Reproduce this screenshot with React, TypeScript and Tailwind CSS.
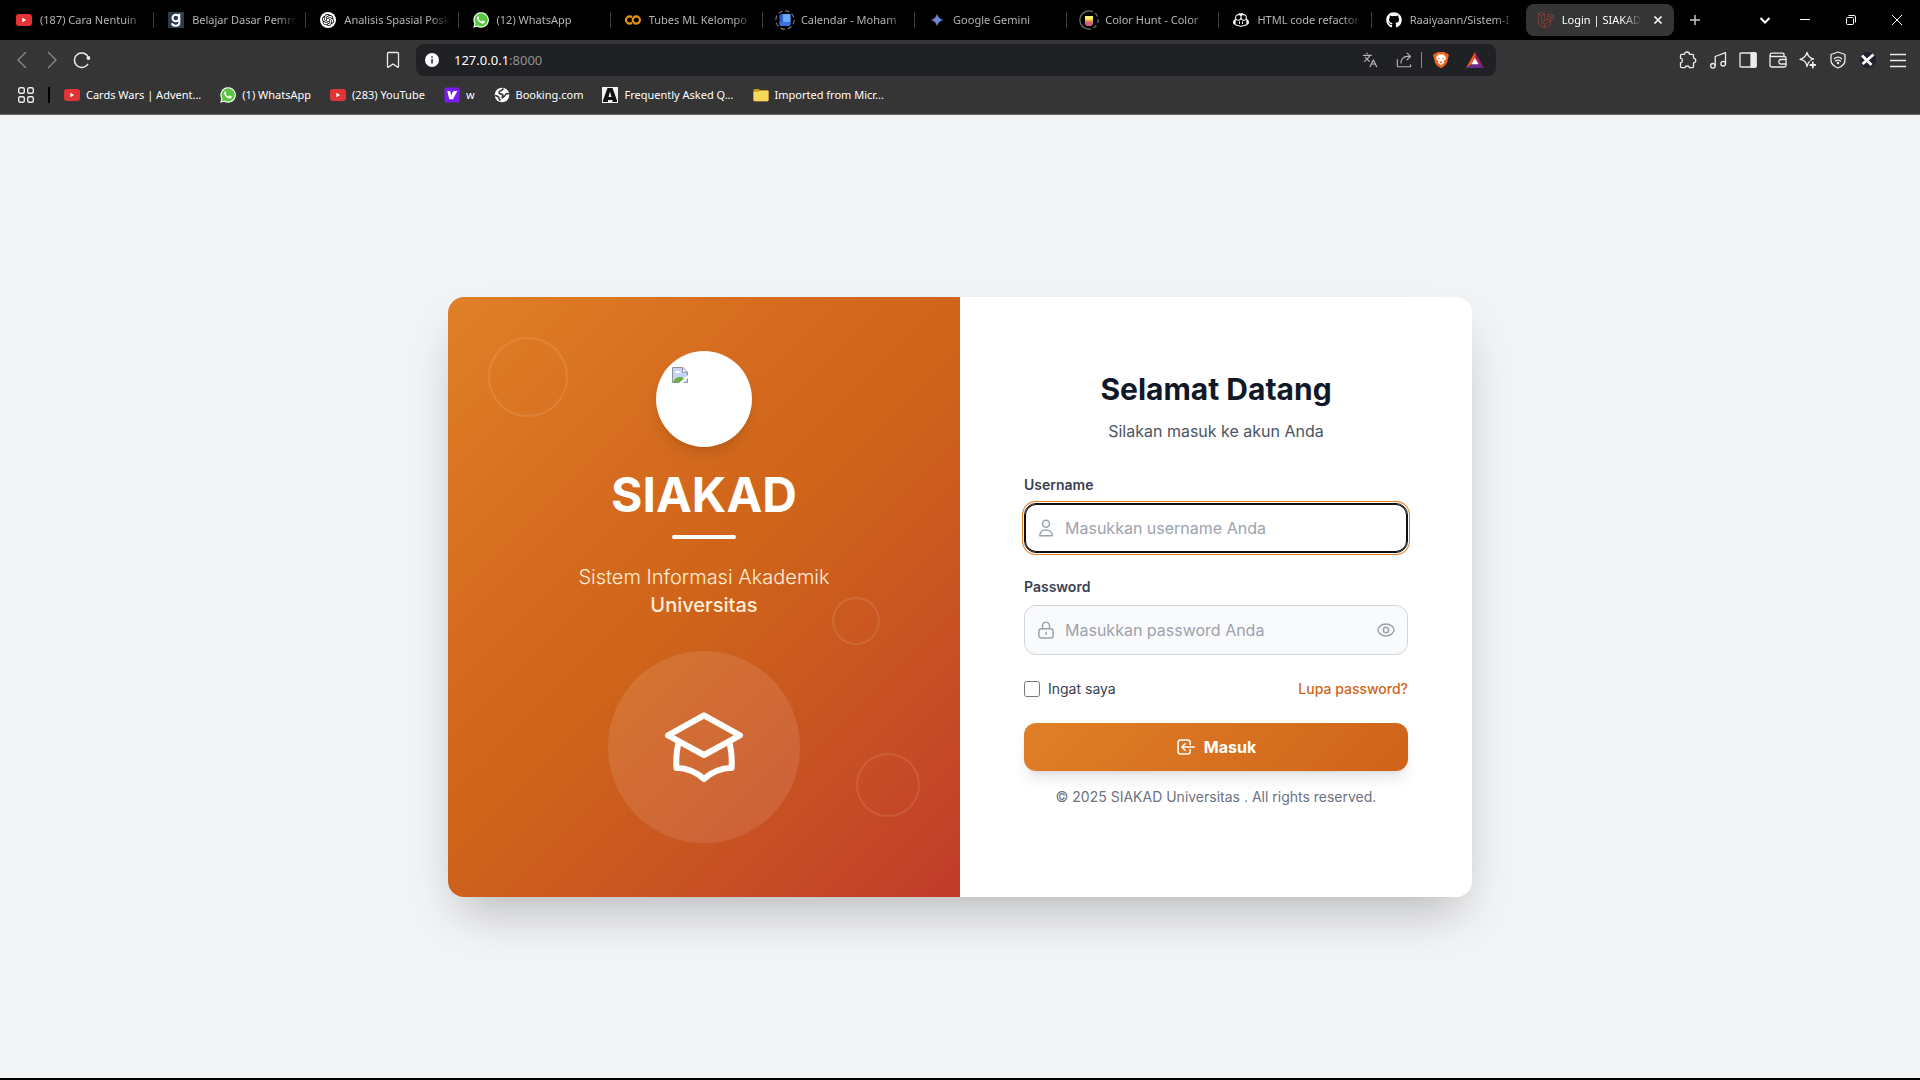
import React from "react";
import type { ReactNode } from "react";
import { FaGithub } from "react-icons/fa";
import { GoCopilot } from "react-icons/go";
import { SiGooglecolab, SiLaravel, SiOpenai } from "react-icons/si";
import { Languages } from "lucide-react";

/* ---------- favicons ---------- */

const YouTubeMark = () => (
  <svg viewBox="0 0 16 16" className="size-4 shrink-0">
    <rect x="0" y="2" width="16" height="12" rx="3" fill="#e13535" />
    <path d="M6.3 5.8v4.4L10.2 8z" fill="#fff" />
  </svg>
);

const WhatsAppMark = () => (
  <svg viewBox="0 0 16 16" className="size-4 shrink-0">
    <path d="M.2 15.8l1.1-4A7.8 7.8 0 1 1 4.3 14.8z" fill="#f4fff2" />
    <path d="M1.8 14.2l.8-2.7A6.6 6.6 0 1 1 4.6 13.5z" fill="#5cc443" />
    <path
      d="M5.3 4.2c-.5 0-1.2.6-1.2 1.7 0 1.3 1 2.6 1.8 3.5 1.1 1.2 2.6 2.1 3.9 2.1 1.2 0 2-.7 2-1.5 0-.5 0-.6-.4-.8l-1.5-.7c-.3-.1-.5 0-.7.2l-.5.7c-.1.2-.3.2-.6.1-1-.4-1.9-1.2-2.5-2.2-.1-.2-.1-.4.1-.6l.4-.5c.1-.2.1-.3 0-.6l-.5-1.2c-.1-.2-.2-.2-.3-.2z"
      fill="#fff"
    />
  </svg>
);

const GLetterMark = () => (
  <svg viewBox="0 0 16 16" className="size-4 shrink-0">
    <rect width="16" height="16" fill="#2d3a52" />
    <circle cx="7.8" cy="6" r="3.3" fill="none" stroke="#fff" strokeWidth="2.1" />
    <path d="M11.3 1.8v8.9c0 4-6.6 4-7.3.6" fill="none" stroke="#fff" strokeWidth="2" />
  </svg>
);

const OpenAiMark = () => (
  <span className="flex size-4 shrink-0 items-center justify-center rounded-full bg-white text-black">
    <SiOpenai className="size-3" />
  </span>
);

const CalendarMark = () => (
  <svg viewBox="0 0 20 20" className="-mx-0.5 size-5 shrink-0">
    <circle cx="10" cy="10" r="9.2" fill="none" stroke="#6f7378" strokeWidth="1.2" strokeDasharray="4.5 2.7" />
    <rect x="4.5" y="4" width="11" height="12" rx="2" fill="#2f62c9" />
    <rect x="8" y="4" width="7.5" height="8" rx="1" fill="#6aa8ff" />
    <path d="M4.5 12h11v2a2 2 0 0 1-2 2h-7a2 2 0 0 1-2-2z" fill="#3c6fe0" />
  </svg>
);

const GeminiMark = () => (
  <svg viewBox="0 0 16 16" className="size-4 shrink-0">
    <defs>
      <linearGradient id="gemini" x1="0" y1="0" x2="1" y2="0">
        <stop offset="0" stopColor="#9a6fc0" />
        <stop offset=".5" stopColor="#6b84dc" />
        <stop offset="1" stopColor="#4fa3e8" />
      </linearGradient>
    </defs>
    <path d="M8 1.5C8.800 5.300 10.700 7.200 14.500 8 10.700 8.800 8.800 10.700 8 14.500 7.200 10.700 5.300 8.800 1.500 8 5.300 7.200 7.200 5.300 8 1.500z" fill="url(#gemini)" />
  </svg>
);

const ColorHuntMark = () => (
  <svg viewBox="0 0 20 20" className="-mx-0.5 size-5 shrink-0">
    <path d="M10 .8a9.2 9.2 0 0 0 0 18.4" fill="none" stroke="#6f7378" strokeWidth="1.2" />
    <path d="M10 .8a9.2 9.2 0 0 1 0 18.4" fill="none" stroke="#6f7378" strokeWidth="1.2" strokeDasharray="4 2.7" />
    <path d="M6 6h8v6a4 4 0 0 1-8 0z" fill="#f6f06a" />
    <path d="M6 9.5h8V12H6z" fill="#f0b429" />
    <path d="M6 11.5h8V12a4 4 0 0 1-8 0z" fill="#d9588c" />
  </svg>
);

const VMark = () => (
  <svg viewBox="0 0 16 16" className="size-4 shrink-0">
    <rect x=".5" y=".5" width="15" height="15" rx="1.5" fill="#7a1cf0" />
    <path d="M3.300 4h2.900l.9 4.700C8.300 6.300 8.300 4 11 4h2.300L9 12.200H5.300z" fill="#fff" />
  </svg>
);

const GlobeMark = () => (
  <svg viewBox="0 0 16 16" className="size-4 shrink-0">
    <circle cx="8" cy="8" r="7.300" fill="#fff" />
    <path
      d="M9.500 1.500C8.500 3.800 4.500 3.500 5 6c.4 1.700 3.500.5 4 2.200.2 1-.8 1.500-1 2.500"
      fill="none"
      stroke="#353535"
      strokeWidth="1.600"
    />
    <path d="M14.800 7c-1.500-.8-3.300-.3-3.500 1-.3 1.800-2.600 1.500-3.300 3.500M1 8.500c1.800.2 3.700.8 4 2.800.1 1 .8 1.700 1.500 2.200" fill="none" stroke="#353535" strokeWidth="1.600" />
  </svg>
);

const LetterAMark = () => (
  <svg viewBox="0 0 16 16" className="size-4 shrink-0">
    <rect width="16" height="16" fill="#f2f2f2" />
    <path d="M5.500 1h5L15 13.500V15h-4.500v-2H6v2H1v-1.500zM8 4.500L6.500 10h3z" fill="#111" fillRule="evenodd" />
  </svg>
);

const FolderMark = () => (
  <svg viewBox="0 0 16 16" className="size-4 shrink-0">
    <path d="M.5 3.200c0-.7.5-1.200 1.200-1.200h4l1.300 1.300h7.300c.7 0 1.200.5 1.200 1.200V13c0 .7-.5 1.200-1.200 1.200H1.700c-.7 0-1.200-.5-1.200-1.200z" fill="#c99a1e" />
    <path d="M.5 4.700h4.800l1.300-1h8.900V13c0 .7-.5 1.200-1.200 1.200H1.700C1 14.200.5 13.700.5 13z" fill="#f6d95b" />
  </svg>
);

/* ---------- browser chrome ---------- */

type Tab = { title: string; icon: ReactNode };

const tabs: Tab[] = [
  { title: "(187) Cara Nentuin", icon: <YouTubeMark /> },
  { title: "Belajar Dasar Pemro", icon: <GLetterMark /> },
  { title: "Analisis Spasial Posk", icon: <OpenAiMark /> },
  { title: "(12) WhatsApp", icon: <WhatsAppMark /> },
  { title: "Tubes ML Kelompo", icon: <SiGooglecolab className="size-4 shrink-0 text-[#e8930c]" /> },
  { title: "Calendar - Moham", icon: <CalendarMark /> },
  { title: "Google Gemini", icon: <GeminiMark /> },
  { title: "Color Hunt - Color", icon: <ColorHuntMark /> },
  { title: "HTML code refactor", icon: <GoCopilot className="size-4 shrink-0 text-white" /> },
  { title: "Raaiyaann/Sistem-I", icon: <FaGithub className="size-4 shrink-0 text-white" /> },
];

const fade = "[mask-image:linear-gradient(to_right,#000_calc(100%-20px),transparent)]";

function TabStrip() {
  return (
    <div className="flex h-10 bg-black text-[11px] leading-4">
      <div className="ml-0.5 grid min-w-0 flex-1 grid-cols-11 items-center">
        {tabs.map((tab, i) => (
          <button key={tab.title} type="button" className="flex h-8 min-w-0 items-center text-left text-[#b4b4b4]">
            <span className="flex min-w-0 flex-1 items-center gap-2 pr-2 pl-3.5">
              {tab.icon}
              <span className={`min-w-0 flex-1 overflow-hidden whitespace-nowrap ${fade}`}>{tab.title}</span>
            </span>
            <span className={i < tabs.length - 1 ? "h-4 w-px bg-[#3a3a3a]" : "h-4 w-px"} />
          </button>
        ))}
        <div className="min-w-0 px-0.5">
          <div className="flex h-8 items-center gap-2 rounded-lg bg-[#353535] pr-2 pl-3 text-white">
            <SiLaravel className="size-4 shrink-0 text-[#b5452f]" />
            <span className={`min-w-0 flex-1 overflow-hidden whitespace-nowrap ${fade}`}>Login | SIAKAD</span>
            <button type="button" aria-label="Close tab" className="flex size-4 items-center justify-center">
              <svg viewBox="0 0 10 10" className="size-2.5" stroke="currentColor" strokeWidth="1.6">
                <path d="M1.500 1.500l7 7M8.500 1.500l-7 7" />
              </svg>
            </button>
          </div>
        </div>
      </div>
      <div className="flex w-[244px] shrink-0 items-center text-white">
        <button type="button" aria-label="New tab" className="flex h-10 w-[38px] items-center justify-center">
          <svg viewBox="0 0 12 12" className="size-3" stroke="#c8c8c8" strokeWidth="1.5">
            <path d="M6 1v10M1 6h10" />
          </svg>
        </button>
        <button type="button" aria-label="Search tabs" className="ml-auto flex h-10 w-[34px] items-center justify-center">
          <svg viewBox="0 0 12 12" className="size-3" fill="none" stroke="currentColor" strokeWidth="2">
            <path d="M1.500 4L6 8.500 10.500 4" />
          </svg>
        </button>
        <button type="button" aria-label="Minimize" className="flex h-10 w-[46px] items-center justify-center">
          <svg viewBox="0 0 10 10" className="size-2.5" stroke="currentColor">
            <path d="M0 4.500h10" />
          </svg>
        </button>
        <button type="button" aria-label="Restore" className="flex h-10 w-[46px] items-center justify-center">
          <svg viewBox="0 0 10 10" className="size-2.5" fill="none" stroke="currentColor">
            <rect x=".5" y="2.500" width="7" height="7" rx="1" />
            <path d="M2.500 .5H8A1.500 1.500 0 0 1 9.500 2v5.500" />
          </svg>
        </button>
        <button type="button" aria-label="Close window" className="flex h-10 w-[46px] items-center justify-center">
          <svg viewBox="0 0 10 10" className="size-2.5" stroke="currentColor">
            <path d="M0 0l10 10M10 0L0 10" />
          </svg>
        </button>
      </div>
    </div>
  );
}

function ToolButton({ label, children }: { label: string; children: ReactNode }) {
  return (
    <button type="button" aria-label={label} className="flex h-8 w-[30px] shrink-0 items-center justify-center">
      {children}
    </button>
  );
}

function Stroke({ children, className = "size-[18px]" }: { children: ReactNode; className?: string }) {
  return (
    <svg viewBox="0 0 18 18" className={className} fill="none" stroke="currentColor" strokeWidth="1.3" strokeLinecap="round" strokeLinejoin="round">
      {children}
    </svg>
  );
}

function Toolbar() {
  return (
    <div className="grid h-10 grid-cols-[416px_minmax(0,1fr)_424px] items-center text-[#ececec]">
      <div className="flex items-center pr-2 pl-[7px]">
        <span className="flex text-[#8c8c8c]">
          <ToolButton label="Back">
            <Stroke><path d="M12.500 1.500L5 9l7.500 7.500" /></Stroke>
          </ToolButton>
          <ToolButton label="Forward">
            <Stroke><path d="M5.500 1.500L13 9l-7.500 7.500" /></Stroke>
          </ToolButton>
        </span>
        <ToolButton label="Reload">
          <svg viewBox="0 0 18 18" className="size-[18px]" fill="none" stroke="currentColor" strokeWidth="1.5" strokeLinecap="round">
            <path d="M14.700 13.400A7.300 7.300 0 1 1 15.500 6.500" />
            <circle cx="15.400" cy="7" r="1.900" fill="currentColor" stroke="none" />
          </svg>
        </ToolButton>
        <span className="ml-auto flex">
          <ToolButton label="Bookmark this page">
            <Stroke><path d="M3.500 2.500a1 1 0 0 1 1-1h9a1 1 0 0 1 1 1v13.200a.6.6 0 0 1-1 .4L9 13l-4.500 3.100a.6.6 0 0 1-1-.4z" /></Stroke>
          </ToolButton>
        </span>
      </div>
      <div className="flex h-8 items-center rounded-lg bg-[#202124] pr-1 pl-2">
        <svg viewBox="0 0 16 16" className="size-4 shrink-0">
          <circle cx="8" cy="8" r="7" fill="#fff" />
          <path d="M7.300 7h1.500v4.500H7.300zM7.300 4.300h1.500v1.500H7.300z" fill="#202124" />
        </svg>
        <div className="ml-3.5 flex-1 text-[13px] leading-5 text-white">
          127.0.0.1<span className="text-[#8f9093]">:8000</span>
        </div>
        <div className="flex items-center text-[#b5b5b5]">
          <button type="button" aria-label="Translate" className="flex w-[34px] justify-center">
            <Languages className="size-4" strokeWidth={1.8} />
          </button>
          <button type="button" aria-label="Share" className="flex w-[34px] justify-center">
            <Stroke className="size-4">
              <path d="M1.500 8.500V16a.6.6 0 0 0 .6.6h13.800a.6.6 0 0 0 .6-.6v-1.500" />
              <path d="M5.500 12.500c0-4.500 3-7.500 7-7.500h3.500M12.500 1.300L16.300 5l-3.800 3.700" />
            </Stroke>
          </button>
          <span className="h-4 w-px bg-[#8b8b8b]" />
          <button type="button" aria-label="Shields" className="ml-0.5 flex w-[34px] justify-center">
            <svg viewBox="0 0 18 18" className="size-[18px]">
              <path d="M5.300 1h7.400l1.400 1.500 1.800-.1 1 2.300-.6 1.600c-.6 4-1.800 7.400-4.300 9L9 17.300l-3-2c-2.500-1.600-3.700-5-4.300-9l-.6-1.600 1-2.300 1.800.1z" fill="#f0641e" />
              <path d="M9 3.600l2.200-.4 2.800 3-.7 2.500-2 1.500 1 1.300L9 14.300l-3.300-2.800 1-1.300-2-1.500L4 6.200l2.800-3z" fill="#fff" />
              <path d="M5.500 6.600l2.300.6-.6 1.200zM12.500 6.600l-2.300.6.6 1.200zM7.300 11.200L9 10.300l1.700.9L9 12.400z" fill="#f0641e" />
            </svg>
          </button>
          <button type="button" aria-label="Rewards" className="flex w-[34px] justify-center">
            <svg viewBox="0 0 18 18" className="size-[18px]">
              <path d="M9 1L0 17l9-6z" fill="#f05b24" />
              <path d="M9 1l9 16-9-6z" fill="#9e1f63" />
              <path d="M0 17h18l-9-6z" fill="#662d91" />
              <path d="M9 7l3.600 6.300H5.400z" fill="#fff" />
            </svg>
          </button>
        </div>
      </div>
      <div className="flex items-center justify-end pr-[7px]">
        <ToolButton label="Extensions">
          <Stroke>
            <path d="M1.500 4.500c0-.8.4-1.200 1.200-1.200h2.800C5.500.2 10.500.2 10.500 3.300h2.800c.8 0 1.200.4 1.200 1.200v2.600c3 .3 3 4.300 0 4.700v3.700c0 .8-.4 1.200-1.200 1.200h-2.900c-.2-2.300-4-2.300-4.300 0H2.700c-.8 0-1.200-.4-1.200-1.200V12c2.500-.6 2.500-4.200 0-4.800z" />
          </Stroke>
        </ToolButton>
        <ToolButton label="Playlist">
          <Stroke>
            <path d="M6.200 14.800V5.500L16.500 1.700v11" />
            <circle cx="3.900" cy="14.800" r="2.300" />
            <circle cx="14.200" cy="12.700" r="2.300" />
          </Stroke>
        </ToolButton>
        <ToolButton label="Side panel">
          <Stroke>
            <rect x="1" y="2" width="16" height="14" rx="1" />
            <path d="M12 2h4.300a.7.7 0 0 1 .7.700v12.600a.7.7 0 0 1-.7.700H12z" fill="currentColor" />
          </Stroke>
        </ToolButton>
        <ToolButton label="Wallet">
          <Stroke>
            <path d="M15 5.500V3.500c0-.8-.5-1.300-1.300-1.300H3A2 2 0 0 0 1 4v10a2 2 0 0 0 2 2h12.500c.8 0 1.500-.5 1.500-1.500V7c0-.8-.5-1.500-1.500-1.500H3A1.700 1.700 0 0 1 1.200 4" />
            <path d="M17 8.500h-5a2 2 0 0 0 0 4.500h5" />
          </Stroke>
        </ToolButton>
        <ToolButton label="Leo AI">
          <Stroke>
            <path d="M8 1.500c.9 4 2.500 5.500 6.500 6.500M8 1.500C7.100 5.500 5.500 7.100 1 8.300c4.500 1 6.100 2.600 7 7.200.5-2.300 1.200-3.700 2.300-4.800M14.500 8c-1 .3-2 .7-2.800 1.200" />
            <path d="M13.800 11.500v5M11.300 14h5" strokeWidth="1.800" />
          </Stroke>
        </ToolButton>
        <ToolButton label="VPN">
          <Stroke>
            <path d="M9 1l7 2.500v5.500c0 4-3 6.500-7 8-4-1.500-7-4-7-8V3.500z" />
            <path d="M5.300 7.700c2.300-1.900 5.100-1.900 7.400 0M6.500 10c1.600-1.200 3.400-1.200 5 0" />
            <circle cx="9" cy="12" r=".6" fill="currentColor" />
          </Stroke>
        </ToolButton>
        <ToolButton label="Profile">
          <svg viewBox="0 0 16 16" className="size-4">
            <circle cx="8" cy="8" r="8" fill="#20232e" />
            <path d="M2 3.500l9.500 9.500M13.500 2.500L2.500 12" stroke="#fff" strokeWidth="2.8" />
          </svg>
        </ToolButton>
        <ToolButton label="Menu">
          <svg viewBox="0 0 18 18" className="size-[18px]" stroke="currentColor" strokeWidth="1.5">
            <path d="M1 3.500h16M1 9.500h16M1 15.500h16" />
          </svg>
        </ToolButton>
      </div>
    </div>
  );
}

const bookmarks: Tab[] = [
  { title: "Cards Wars | Advent...", icon: <YouTubeMark /> },
  { title: "(1) WhatsApp", icon: <WhatsAppMark /> },
  { title: "(283) YouTube", icon: <YouTubeMark /> },
  { title: "w", icon: <VMark /> },
  { title: "Booking.com", icon: <GlobeMark /> },
  { title: "Frequently Asked Q...", icon: <LetterAMark /> },
  { title: "Imported from Micr...", icon: <FolderMark /> },
];

function BookmarksBar() {
  return (
    <nav className="flex h-[30px] items-center pl-[18px] text-[11px] leading-4 text-white">
      <button type="button" aria-label="Apps">
        <svg viewBox="0 0 16 16" className="size-4" fill="none" stroke="#ececec" strokeWidth="1.4">
          <rect x=".7" y=".7" width="5.600" height="5.600" rx="1.5" />
          <rect x="9.700" y=".7" width="5.600" height="5.600" rx="1.5" />
          <rect x=".7" y="9.700" width="5.600" height="5.600" rx="1.5" />
          <rect x="9.700" y="9.700" width="5.600" height="5.600" rx="1.5" />
        </svg>
      </button>
      <span className="mr-3.5 ml-3.5 h-4 w-0.5 bg-black" />
      <div className="flex items-center gap-[19px]">
        {bookmarks.map((b) => (
          <a key={b.title} href="#" className="flex items-center gap-1.5 whitespace-nowrap">
            {b.icon}
            {b.title}
          </a>
        ))}
      </div>
    </nav>
  );
}

/* ---------- login page ---------- */

function Glyph({ className, children, width = 1.5 }: { className: string; children: ReactNode; width?: number }) {
  return (
    <svg viewBox="0 0 24 24" className={className} fill="none" stroke="currentColor" strokeWidth={width} strokeLinecap="round" strokeLinejoin="round">
      {children}
    </svg>
  );
}

function BrokenImage() {
  return (
    <svg viewBox="0 0 16 16" className="size-4" role="img" aria-label="Logo">
      <path d="M1 1h10l4 4v10H1z" fill="#c5d4f8" />
      <path d="M11 1v4h4z" fill="#fff" />
      <path d="M3 5.500a1.500 1.500 0 0 1 2-1.300 1.700 1.700 0 0 1 3 .8c.8 0 1 1 .3 1H3.300z" fill="#fff" />
      <path d="M1 15c1.500-3.500 4.500-5.500 7.500-5 1.500.3 2.500 1 3.500 2v3z" fill="#6fae3a" />
      <path d="M.5.5h10.300l4.700 4.700v10.300H.5z" fill="none" stroke="#8f9499" />
      <path d="M10.500.5v4.700h5" fill="none" stroke="#8f9499" />
      <path d="M7 16l9-8v3l-5 5z" fill="#fff" />
    </svg>
  );
}

function BrandPanel() {
  return (
    <section className="relative flex flex-col items-center justify-center bg-[linear-gradient(135deg,#e08027_0%,#d66c1f_30%,#cf641a_50%,#c74f24_78%,#c03b2a_100%)] p-12 text-center text-white">
      <span className="absolute top-10 left-10 size-20 rounded-full border-2 border-white/10" />
      <span className="absolute top-1/2 right-20 size-12 rounded-full border-2 border-white/10" />
      <span className="absolute right-10 bottom-20 size-16 rounded-full border-2 border-white/10" />
      <div className="mb-6 size-24 rounded-full bg-white p-4 shadow-lg">
        <BrokenImage />
      </div>
      <h1 className="mb-4 text-5xl leading-12 font-bold">SIAKAD</h1>
      <div className="mb-6 h-1 w-16 rounded-full bg-white" />
      <p className="mb-8 text-xl leading-7 font-light text-[#ffedd5]">
        Sistem Informasi Akademik
        <br />
        <span className="font-medium">Universitas</span>
      </p>
      <div className="flex size-48 items-center justify-center rounded-full bg-white/10">
        <Glyph className="size-24">
          <path d="M12 4.100l9 5-9 4.900-9-4.900z" />
          <path d="M5.700 10.800c-.6 2-.7 4.300-.6 6.400 2.500.1 4.900 1 6.900 2.800 2-1.800 4.400-2.700 6.900-2.800.1-2.100 0-4.400-.6-6.400" />
        </Glyph>
      </div>
    </section>
  );
}

function LoginForm() {
  return (
    <section className="flex flex-col justify-center bg-white px-16 pt-12 pb-16">
      <h2 className="mb-3 text-center text-3xl leading-9 font-bold text-[#111827]">Selamat Datang</h2>
      <p className="mb-8 text-center text-base leading-6 text-[#4b5563]">Silakan masuk ke akun Anda</p>
      <form onSubmit={(e) => e.preventDefault()}>
        <label htmlFor="username" className="mb-2 block text-sm leading-5 font-semibold text-[#374151]">
          Username
        </label>
        <div className="relative mb-6 text-[#9ca3af]">
          <input
            id="username"
            type="text"
            placeholder="Masukkan username Anda"
            className="block w-full rounded-xl border border-[#101010] bg-white py-3 pr-4 pl-10 text-base leading-6 text-[#111827] shadow-[inset_0_0_0_1px_#101010,0_0_0_1px_#fff,0_0_0_2px_#e08027] outline-none placeholder:text-[#9ca3af]"
          />
          <span className="pointer-events-none absolute inset-y-0 left-3 flex items-center">
            <Glyph className="size-5" width={1.8}>
              <circle cx="12" cy="7" r="4.200" />
              <path d="M4.500 21.300c0-4 3-7 7.500-7s7.500 3 7.500 7z" />
            </Glyph>
          </span>
        </div>
        <label htmlFor="password" className="mb-2 block text-sm leading-5 font-semibold text-[#374151]">
          Password
        </label>
        <div className="relative mb-6 text-[#9ca3af]">
          <input
            id="password"
            type="password"
            placeholder="Masukkan password Anda"
            className="block w-full rounded-xl border border-[#d1d5db] bg-[#f9fafb] px-10 py-3 text-base leading-6 text-[#111827] placeholder:text-[#9ca3af]"
          />
          <span className="pointer-events-none absolute inset-y-0 left-3 flex items-center">
            <Glyph className="size-5" width={1.8}>
              <rect x="3.500" y="10.500" width="17" height="11" rx="3" />
              <path d="M7.800 10.500V7a4.200 4.200 0 0 1 8.400 0v3.500M12 15v2" />
            </Glyph>
          </span>
          <button type="button" aria-label="Show password" className="absolute inset-y-0 right-3 flex items-center">
            <Glyph className="size-5" width={1.8}>
              <path d="M2.400 12c0-3.500 4.300-7.200 9.600-7.200s9.600 3.700 9.600 7.200-4.300 7.200-9.600 7.200S2.400 15.500 2.400 12z" />
              <circle cx="12" cy="12" r="3.200" />
            </Glyph>
          </button>
        </div>
        <div className="mb-6 flex items-center justify-between text-sm leading-5">
          <label className="flex items-center gap-2 text-[#374151]">
            <input type="checkbox" className="size-4" />
            Ingat saya
          </label>
          <a href="#" className="font-medium text-[#d0651b]">
            Lupa password?
          </a>
        </div>
        <button
          type="submit"
          className="flex w-full items-center justify-center gap-2 rounded-xl bg-[linear-gradient(135deg,#e08027,#cf631a)] py-3 text-base leading-6 font-bold text-white shadow-lg"
        >
          <Glyph className="size-5" width={1.8}>
            <path d="M17 9V6.500a3 3 0 0 0-3-3H5.500a3 3 0 0 0-3 3v11a3 3 0 0 0 3 3H14a3 3 0 0 0 3-3V15" />
            <path d="M22 12H7.500M11 8l-4 4 4 4" />
          </Glyph>
          Masuk
        </button>
      </form>
      <p className="mt-4 text-center text-sm leading-5 text-[#6b7280]">© 2025 SIAKAD Universitas . All rights reserved.</p>
    </section>
  );
}

export default function App() {
  return (
    <div className="flex min-h-screen flex-col bg-[#f3f4f6]">
      <header className="border-b border-[#6a6a6a] bg-[#353535] font-['Noto_Sans','Open_Sans',sans-serif]">
        <TabStrip />
        <Toolbar />
        <BookmarksBar />
        <div className="h-1" />
      </header>
      <main className="flex flex-1 items-center justify-center border-b-2 border-black p-4 font-[Inter,sans-serif]">
        <div className="grid min-h-[600px] w-full max-w-5xl grid-cols-2 overflow-hidden rounded-2xl shadow-2xl">
          <BrandPanel />
          <LoginForm />
        </div>
      </main>
    </div>
  );
}
